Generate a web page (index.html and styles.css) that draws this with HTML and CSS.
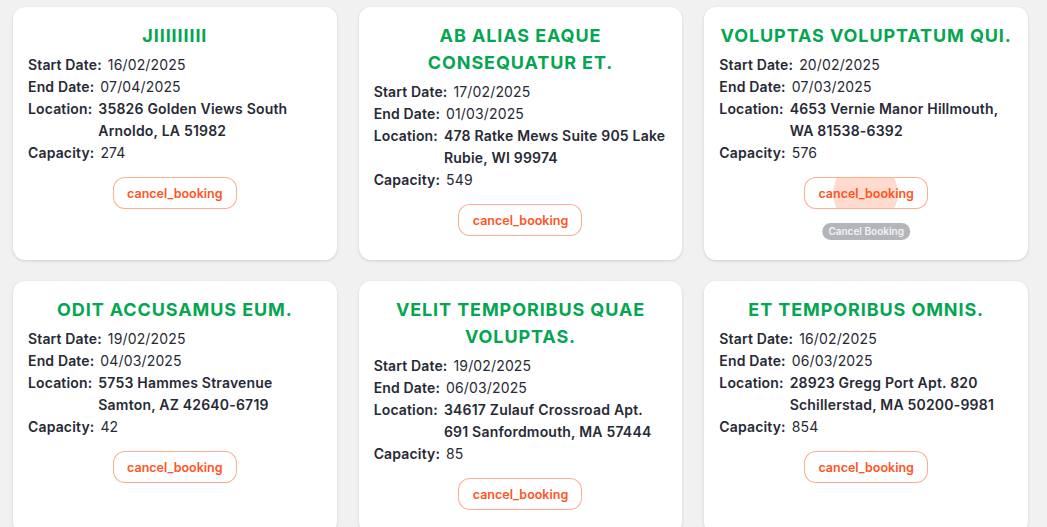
FILE: index.html
```html
<!DOCTYPE html>
<html lang="en">
<head>
<meta charset="utf-8">
<title>Bookings</title>
<link rel="stylesheet" href="styles.css">
</head>
<body>
<main class="grid">
  <section class="card">
    <h2 class="title">JIIIIIIIII</h2>
    <div class="row"><span class="label">Start Date:</span><span class="value">16/02/2025</span></div>
    <div class="row"><span class="label">End Date:</span><span class="value">07/04/2025</span></div>
    <div class="row"><span class="label">Location:</span><span class="value strong">35826 Golden Views South Arnoldo, LA 51982</span></div>
    <div class="row"><span class="label">Capacity:</span><span class="value">274</span></div>
    <div class="actions"><button class="cancel">cancel_booking</button></div>
  </section>
  <section class="card">
    <h2 class="title">AB ALIAS EAQUE CONSEQUATUR ET.</h2>
    <div class="row"><span class="label">Start Date:</span><span class="value">17/02/2025</span></div>
    <div class="row"><span class="label">End Date:</span><span class="value">01/03/2025</span></div>
    <div class="row"><span class="label">Location:</span><span class="value strong">478 Ratke Mews Suite 905 Lake Rubie, WI 99974</span></div>
    <div class="row"><span class="label">Capacity:</span><span class="value">549</span></div>
    <div class="actions"><button class="cancel">cancel_booking</button></div>
  </section>
  <section class="card">
    <h2 class="title">VOLUPTAS VOLUPTATUM QUI.</h2>
    <div class="row"><span class="label">Start Date:</span><span class="value">20/02/2025</span></div>
    <div class="row"><span class="label">End Date:</span><span class="value">07/03/2025</span></div>
    <div class="row"><span class="label">Location:</span><span class="value strong">4653 Vernie Manor Hillmouth, WA 81538-6392</span></div>
    <div class="row"><span class="label">Capacity:</span><span class="value">576</span></div>
    <div class="actions">
      <button class="cancel"><span class="ripple"></span><span class="btn-text">cancel_booking</span></button>
      <div class="tooltip">Cancel Booking</div>
    </div>
  </section>
  <section class="card">
    <h2 class="title">ODIT ACCUSAMUS EUM.</h2>
    <div class="row"><span class="label">Start Date:</span><span class="value">19/02/2025</span></div>
    <div class="row"><span class="label">End Date:</span><span class="value">04/03/2025</span></div>
    <div class="row"><span class="label">Location:</span><span class="value strong">5753 Hammes Stravenue Samton, AZ 42640-6719</span></div>
    <div class="row"><span class="label">Capacity:</span><span class="value">42</span></div>
    <div class="actions"><button class="cancel">cancel_booking</button></div>
  </section>
  <section class="card">
    <h2 class="title">VELIT TEMPORIBUS QUAE VOLUPTAS.</h2>
    <div class="row"><span class="label">Start Date:</span><span class="value">19/02/2025</span></div>
    <div class="row"><span class="label">End Date:</span><span class="value">06/03/2025</span></div>
    <div class="row"><span class="label">Location:</span><span class="value strong">34617 Zulauf Crossroad Apt. 691 Sanfordmouth, MA 57444</span></div>
    <div class="row"><span class="label">Capacity:</span><span class="value">85</span></div>
    <div class="actions"><button class="cancel">cancel_booking</button></div>
  </section>
  <section class="card">
    <h2 class="title">ET TEMPORIBUS OMNIS.</h2>
    <div class="row"><span class="label">Start Date:</span><span class="value">16/02/2025</span></div>
    <div class="row"><span class="label">End Date:</span><span class="value">06/03/2025</span></div>
    <div class="row"><span class="label">Location:</span><span class="value strong">28923 Gregg Port Apt. 820 Schillerstad, MA 50200-9981</span></div>
    <div class="row"><span class="label">Capacity:</span><span class="value">854</span></div>
    <div class="actions"><button class="cancel">cancel_booking</button></div>
  </section>
</main>
</body>
</html>
```

FILE: styles.css
```css
* { box-sizing: border-box; }

html, body {
  margin: 0;
  background: #f1f1f1;
}

body {
  font-family: Inter, "Noto Sans", "Liberation Sans", sans-serif;
  color: #272a35;
  overflow: hidden;
}

.grid {
  display: grid;
  grid-template-columns: repeat(3, 1fr);
  column-gap: 22px;
  row-gap: 21px;
  padding: 7px 19px 0 13px;
}

.card {
  background: #ffffff;
  border-radius: 12px;
  box-shadow: 0 1px 3px rgba(0, 0, 0, 0.14);
  padding: 15px;
  position: relative;
}

.title {
  margin: 0 0 5px 0;
  text-align: center;
  color: #05a552;
  font-size: 18px;
  line-height: 27px;
  font-weight: 700;
  letter-spacing: 0.9px;
}

.row {
  display: flex;
  gap: 6px;
  font-size: 14px;
  line-height: 22px;
  letter-spacing: 0.15px;
}

.label {
  font-weight: 600;
  flex: none;
}

.value {
  font-weight: 400;
}

.value.strong {
  font-weight: 600;
  letter-spacing: 0.2px;
}

.actions {
  position: relative;
  display: flex;
  justify-content: center;
  margin-top: 13px;
  margin-bottom: 9px;
}

.cancel {
  position: relative;
  overflow: hidden;
  font-family: inherit;
  font-size: 12.5px;
  font-weight: 600;
  color: #ff5424;
  background: #ffffff;
  border: 1px solid rgba(255, 87, 34, 0.5);
  border-radius: 12px;
  height: 32px;
  padding: 0 10px;
  width: 124px;
  cursor: pointer;
}

.btn-text {
  position: relative;
}

.ripple {
  position: absolute;
  width: 65px;
  height: 65px;
  border-radius: 50%;
  left: 28px;
  top: -17px;
  background: rgba(255, 87, 34, 0.22);
}

.tooltip {
  position: absolute;
  top: 46px;
  left: 50%;
  transform: translateX(-50%);
  background: #b3b5ba;
  color: #f3f3f4;
  font-size: 10px;
  font-weight: 600;
  line-height: 17px;
  height: 17px;
  padding: 0 6px;
  border-radius: 9px;
  white-space: nowrap;
}
```
